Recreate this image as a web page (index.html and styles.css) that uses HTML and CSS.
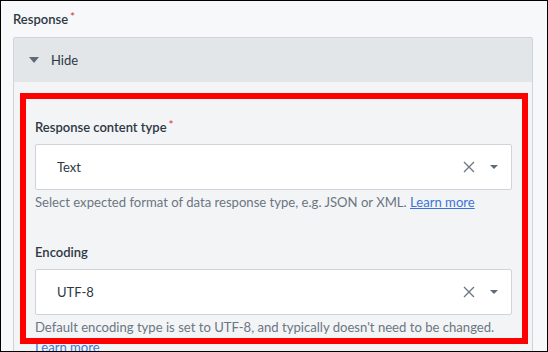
FILE: index.html
```html
<!DOCTYPE html>
<html lang="en">

<head>
    <meta charset="UTF-8">
    <meta name="viewport" content="width=device-width, initial-scale=1.0">
    <title>Response settings</title>
    <link rel="stylesheet" href="styles.css">
</head>

<body>
    <div class="frame">
        <div class="field-label">Response<span class="req">*</span></div>

        <section class="panel">
            <div class="panel-head">
                <svg class="caret" width="10" height="6" viewBox="0 0 10 6"><path d="M0 0h10L5 6z" /></svg>
                <span>Hide</span>
            </div>

            <div class="panel-body">
                <div class="field">
                    <div class="field-label">Response content type<span class="req">*</span></div>
                    <div class="select">
                        <span class="value">Text</span>
                        <svg class="clear" width="12" height="12" viewBox="0 0 12 12"><path d="M1 1l10 10M11 1L1 11" /></svg>
                        <svg class="drop" width="8" height="4" viewBox="0 0 8 4"><path d="M0 0h8L4 4z" /></svg>
                    </div>
                    <p class="help">Select expected format of data response type, e.g. JSON or XML. <a href="#">Learn more</a></p>
                </div>

                <div class="field">
                    <div class="field-label">Encoding</div>
                    <div class="select">
                        <span class="value">UTF-8</span>
                        <svg class="clear" width="12" height="12" viewBox="0 0 12 12"><path d="M1 1l10 10M11 1L1 11" /></svg>
                        <svg class="drop" width="8" height="4" viewBox="0 0 8 4"><path d="M0 0h8L4 4z" /></svg>
                    </div>
                    <p class="help">Default encoding type is set to UTF-8, and typically doesn't need to be changed. <a href="#">Learn more</a></p>
                </div>
            </div>
        </section>

        <!-- annotation box drawn over the two fields -->
        <div class="highlight"></div>
    </div>
</body>

</html>
```

FILE: styles.css
```css
html,
body {
    margin: 0;
    padding: 0;
    background: #f7f8fa;
    font-family: 'Lato', 'Noto Sans', sans-serif;
    color: #2d3843;
}

.frame {
    position: relative;
    box-sizing: border-box;
    width: 548px;
    height: 352px;
    border: 1px solid #000;
    padding: 8px 14px 0 12px;
    overflow: hidden;
    background: #f7f8fa;
}

.field-label {
    font-size: 13px;
    font-weight: 600;
    line-height: 20px;
    color: #2d3843;
}

.req {
    position: relative;
    top: -3px;
    color: #d23c3c;
    font-weight: 400;
    margin-left: 2px;
    font-size: 12px;
    line-height: 0;
}

.panel {
    margin-top: 8px;
    border: 1px solid #d0d4d9;
    border-radius: 2px;
    background: #f3f4f6;
}

.panel-head {
    display: flex;
    align-items: center;
    gap: 12px;
    height: 44px;
    padding-left: 15px;
    background: #e3e6e9;
    font-size: 13px;
    color: #2d3843;
}

.caret {
    fill: #5f6b77;
}

.panel-body {
    padding: 35px 20px 0 21px;
    height: 300px;
}

.field + .field {
    margin-top: 30px;
}

.select {
    display: flex;
    align-items: center;
    height: 46px;
    margin-top: 7px;
    padding: 0 13px 0 21px;
    box-sizing: border-box;
    background: #fff;
    border: 1px solid #d0d4d9;
    border-radius: 2px;
    font-size: 13px;
    color: #2d3843;
}

.value {
    flex: 1;
}

.clear {
    stroke: #6b7682;
    stroke-width: 1.3;
    fill: none;
}

.drop {
    fill: #5f6b77;
    margin-left: 15px;
}

.help {
    margin: 2px 0 0;
    font-size: 13.1px;
    line-height: 20px;
    color: #6b7682;
}

.help a {
    color: #3b74d6;
    text-decoration: underline;
}

/* red annotation rectangle */
.highlight {
    position: absolute;
    left: 19px;
    top: 92px;
    width: 508px;
    height: 251px;
    box-sizing: border-box;
    border: 6px solid #ff0000;
    pointer-events: none;
}
```
